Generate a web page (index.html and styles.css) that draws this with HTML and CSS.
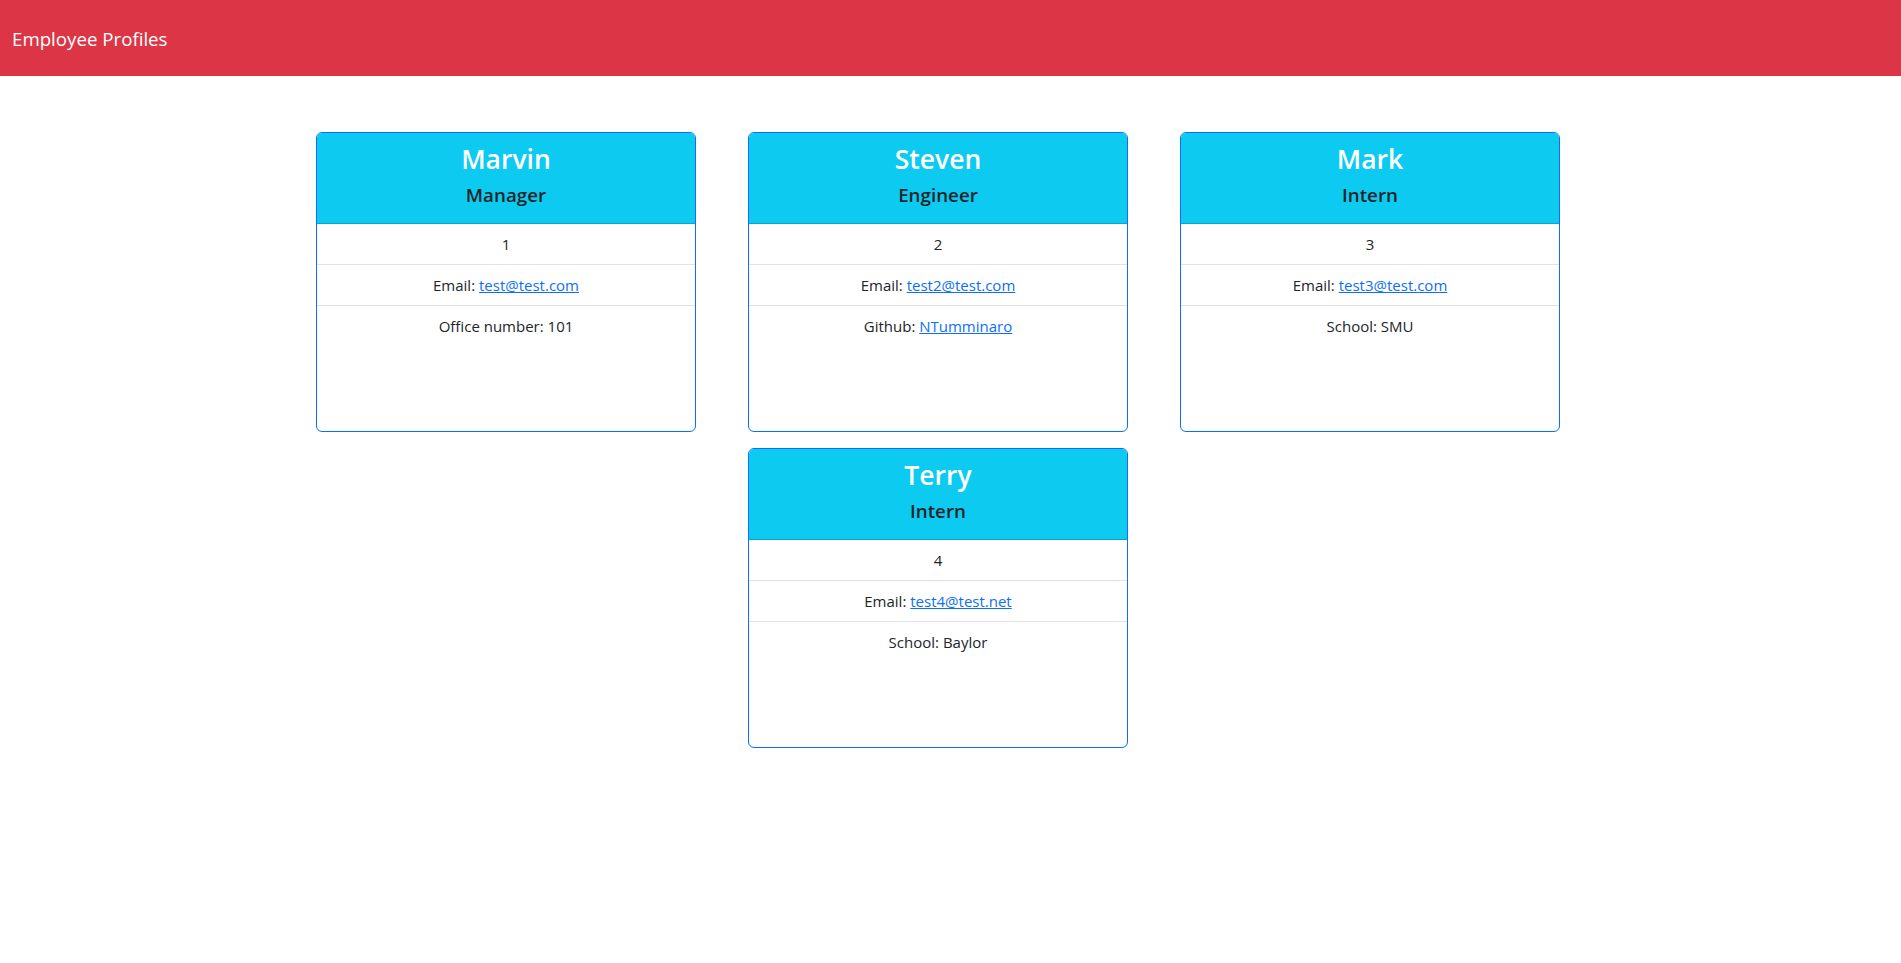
FILE: index.html
```html
<!DOCTYPE html>
<html lang="en">
<head>
<meta charset="utf-8">
<title>Employee Profiles</title>
<link rel="stylesheet" href="styles.css">
</head>
<body>
<nav class="navbar">
  <span class="brand">Employee Profiles</span>
</nav>
<div class="page">
  <div class="cards">
    <div class="card">
      <div class="card-header">
        <h3 class="name">Marvin</h3>
        <h5 class="role">Manager</h5>
      </div>
      <ul class="list">
        <li class="item">1</li>
        <li class="item">Email: <a href="#">test@test.com</a></li>
        <li class="item">Office number: 101</li>
      </ul>
    </div>
    <div class="card">
      <div class="card-header">
        <h3 class="name">Steven</h3>
        <h5 class="role">Engineer</h5>
      </div>
      <ul class="list">
        <li class="item">2</li>
        <li class="item">Email: <a href="#">test2@test.com</a></li>
        <li class="item">Github: <a href="#">NTumminaro</a></li>
      </ul>
    </div>
    <div class="card">
      <div class="card-header">
        <h3 class="name">Mark</h3>
        <h5 class="role">Intern</h5>
      </div>
      <ul class="list">
        <li class="item">3</li>
        <li class="item">Email: <a href="#">test3@test.com</a></li>
        <li class="item">School: SMU</li>
      </ul>
    </div>
    <div class="card">
      <div class="card-header">
        <h3 class="name">Terry</h3>
        <h5 class="role">Intern</h5>
      </div>
      <ul class="list">
        <li class="item">4</li>
        <li class="item">Email: <a href="#">test4@test.net</a></li>
        <li class="item">School: Baylor</li>
      </ul>
    </div>
  </div>
</div>
</body>
</html>
```
FILE: styles.css
```css
* { box-sizing: border-box; }
html, body {
  margin: 0;
  padding: 0;
  background: #fff;
  color: #212529;
  font-family: "Open Sans", "Noto Sans", sans-serif;
  font-size: 15px;
  line-height: 24px;
}
.navbar {
  height: 76px;
  background: #dc3545;
  display: flex;
  align-items: center;
  padding: 0 12px;
}
.brand {
  color: #fff;
  font-size: 18.7px;
  line-height: 30px;
  padding-top: 1px;
}
.page {
  padding: 56px 25px 0 0;
}
.cards {
  width: 1244px;
  margin: 0 auto;
  display: flex;
  flex-wrap: wrap;
  justify-content: center;
  column-gap: 52px;
  row-gap: 16px;
}
.card {
  width: 380px;
  height: 300px;
  border: 1px solid #0d6efd;
  border-radius: 6px;
  overflow: hidden;
  display: flex;
  flex-direction: column;
}
.card-header {
  background: #0dcaf0;
  border-bottom: 1px solid rgba(0, 0, 0, 0.175);
  padding: 8px 16px;
  text-align: center;
}
.name {
  margin: 0 0 8px;
  font-size: 26.5px;
  line-height: 34px;
  font-weight: 600;
  color: #fff;
  padding-top: 1px;
  height: 34px;
}
.role {
  margin: 0 0 8px;
  font-size: 18.8px;
  line-height: 24px;
  font-weight: 600;
  color: #212529;
}
.list {
  list-style: none;
  margin: 0;
  padding: 0;
}
.item {
  padding: 8px 16px;
  text-align: center;
  border-bottom: 1px solid #dee2e6;
}
.item:last-child {
  border-bottom: none;
}
.item a {
  color: #0d6efd;
  text-decoration: underline;
}
```
